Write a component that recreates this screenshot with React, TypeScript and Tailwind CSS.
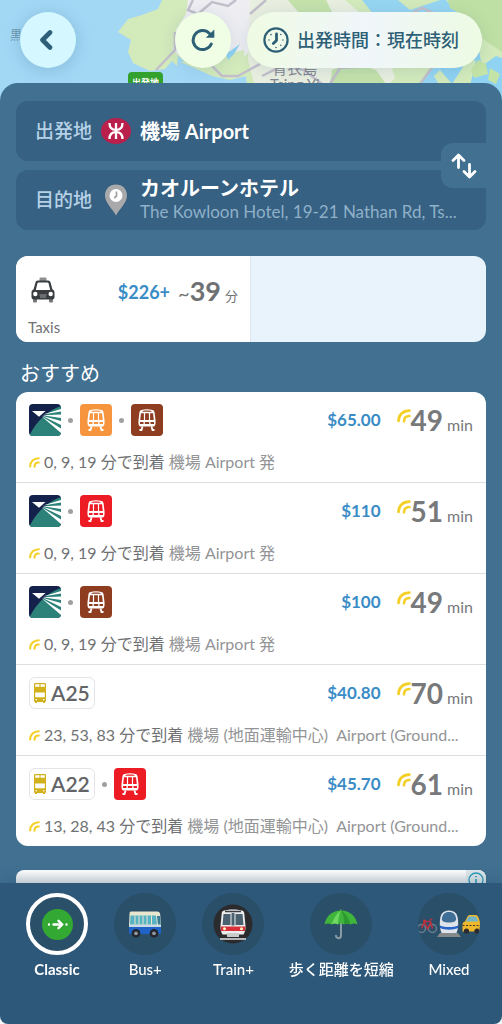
import { Fragment, ReactNode } from 'react';

type Leg = { kind: 'ael' | 'tcl' | 'twl' | 'ktl' } | { kind: 'bus'; route: string };

type Route = {
  legs: Leg[];
  price: string;
  minutes: number;
  arrivals: string;
  from: string;
};

const routes: Route[] = [
  {
    legs: [{ kind: 'ael' }, { kind: 'tcl' }, { kind: 'ktl' }],
    price: '$65.00',
    minutes: 49,
    arrivals: '0, 9, 19 分で到着',
    from: '機場 Airport 発',
  },
  {
    legs: [{ kind: 'ael' }, { kind: 'twl' }],
    price: '$110',
    minutes: 51,
    arrivals: '0, 9, 19 分で到着',
    from: '機場 Airport 発',
  },
  {
    legs: [{ kind: 'ael' }, { kind: 'ktl' }],
    price: '$100',
    minutes: 49,
    arrivals: '0, 9, 19 分で到着',
    from: '機場 Airport 発',
  },
  {
    legs: [{ kind: 'bus', route: 'A25' }],
    price: '$40.80',
    minutes: 70,
    arrivals: '23, 53, 83 分で到着',
    from: '機場 (地面運輸中心)\u00a0 Airport (Ground...',
  },
  {
    legs: [{ kind: 'bus', route: 'A22' }, { kind: 'twl' }],
    price: '$45.70',
    minutes: 61,
    arrivals: '13, 28, 43 分で到着',
    from: '機場 (地面運輸中心)\u00a0 Airport (Ground...',
  },
];

const lineColors = {
  tcl: 'bg-[#f7943e]',
  twl: 'bg-[#ed1b24]',
  ktl: 'bg-[#8f3d20]',
};

function MapBackdrop() {
  return (
    <div className="absolute inset-x-0 top-0 h-28 overflow-hidden bg-[#a3d8f5]">
      <svg
        className="h-full w-full"
        viewBox="0 0 502 112"
        preserveAspectRatio="xMidYMin slice"
        aria-hidden="true"
      >
        <rect width="502" height="112" fill="#a3d8f5" />
        <path
          d="M162 0 L158 9 L142 15 L128 19 L118 32 L131 40 L128 52 L133 63 L150 71 L165 69 L172 61 L177 66 L178 56 L190 66 L212 76 L230 80 L246 76 L250 112 L502 112 L502 0 Z"
          fill="#d3eabb"
        />
        <path d="M188 0 L186 14 L176 30 L173 50 L186 62 L240 62 L262 36 L250 0 Z" fill="#eeeef2" />
        <path d="M180 62 L212 58 L244 50 L246 76 L230 79 L212 75 Z" fill="#d3eabb" />
        <path d="M250 0 L345 0 L380 30 L395 78 L360 112 L262 112 L248 60 Z" fill="#e9efe0" />
        <path d="M362 0 L398 0 L410 10 L440 0 L446 0 L462 18 L450 60 L434 76 L442 90 L420 84 L440 60 L400 30 L378 20 Z" fill="#97d6f2" />
        <path d="M482 66 L496 56 L502 58 L502 112 L488 96 L470 86 L476 60 L466 62 L452 84 L440 70 L452 30 L478 46 Z" fill="#8fd2f2" />
        <path d="M478 60 L486 64 L488 74 L474 78 L471 70 Z M490 68 L500 74 L496 84 L488 80 Z" fill="#c3e4a6" />
        <path d="M448 0 L502 0 L502 52 L484 40 L472 20 L450 8 Z" fill="#bfe0a4" />
        <path d="M332 70 L352 62 L376 70 L386 84 L330 84 Z M288 0 L326 0 L334 16 L300 14 Z" fill="#c4e2aa" />
        <path d="M226 54 L240 44 L234 54 L228 60 Z" fill="#8fd2f2" />
        <g fill="none" stroke="#c2bfcb" strokeWidth="2.5">
          <path d="M193 0 L188 10 L198 14 L212 2 L228 6 L236 0" />
          <path d="M175 32 L175 50 L156 70" />
          <path d="M212 66 L222 76 L238 76 L260 64" />
          <path d="M250 14 L266 0 M262 76 L282 66 L304 70 L322 84" />
          <path d="M410 14 L422 8 L440 16 M420 84 L436 62" />
          <path d="M330 84 L340 68 L372 66" />
        </g>
      </svg>
      <span className="absolute top-7 left-2.5 text-[12px] leading-4 text-[#6d97ae]">黒</span>
      <span className="absolute top-[72px] left-[128px] rounded-sm bg-[#33a12e] px-1 pt-[3px] text-[9px] leading-4 font-bold text-white">
        出発地
      </span>
      <span className="absolute top-[60px] left-[270px] text-center text-[15px] leading-4 text-[#85878f]">
        青衣島
        <br />
        Tsing Yi
      </span>
    </div>
  );
}

function ClockIcon() {
  return (
    <svg className="h-[26px] w-[26px]" viewBox="0 0 26 26" fill="none" stroke="#2d6076" aria-hidden="true">
      <circle cx="13" cy="13" r="11.6" strokeWidth="2.2" />
      <path d="M13.5 7v6.400l-3.200 3.200" strokeWidth="2.8" strokeLinecap="round" strokeLinejoin="round" />
      <path
        d="M17.8 7.400v.1M20 13v.1M17.8 18.2v.1M13 20.400v.1M8 7.600v.1M6 13v.1"
        strokeWidth="1.5"
        strokeLinecap="round"
      />
    </svg>
  );
}

function MtrLogo() {
  return (
    <svg className="h-[26px] w-[30px]" viewBox="0 0 30 26" aria-hidden="true">
      <ellipse cx="15" cy="13" rx="15" ry="13" fill="#b9204b" />
      <g fill="none" stroke="#fff" strokeWidth="2.3">
        <path d="M15 5v16" />
        <path d="M8.500 5c0 4.500 2.600 6.900 6.500 6.900s6.500-2.400 6.500-6.900" />
        <path d="M8.500 21c0-4.500 2.600-6.900 6.500-6.900s6.500 2.400 6.500 6.900" />
      </g>
    </svg>
  );
}

function PinIcon() {
  return (
    <svg className="h-8 w-6" viewBox="0 0 24 32" aria-hidden="true">
      <path d="M12 .5C5.500.5 1 5.200 1 11.200 1 19 8 24 12 31.500 16 24 23 19 23 11.200 23 5.200 18.500.5 12 .5Z" fill="#a9a9ab" />
      <circle cx="12" cy="11.500" r="6.500" fill="#fff" />
      <path d="M12.500 7.500v4.500l-2.300 2" fill="none" stroke="#a0a0a3" strokeWidth="1.700" />
    </svg>
  );
}

function TaxiIcon() {
  return (
    <svg className="h-[26px] w-6" viewBox="0 0 24 26" aria-hidden="true">
      <rect x="8.500" y="0.500" width="7" height="4" rx="1" fill="#8d8f91" />
      <path d="M2 21h4v3.500a1 1 0 0 1-1 1H3a1 1 0 0 1-1-1ZM18 21h4v3.500a1 1 0 0 1-1 1h-2a1 1 0 0 1-1-1Z" fill="#77797b" />
      <path
        d="M7 3.500h10c1.500 0 2.200.8 2.600 2.200l1.800 6.500C23 13 23.500 14 23.500 15.500V20c0 1.600-.8 2.500-2.300 2.500H2.800C1.300 22.500.5 21.600.5 20v-4.500C.5 14 1 13 2.600 12.200l1.800-6.500C4.800 4.300 5.500 3.500 7 3.500Z"
        fill="#3a3d40"
      />
      <path d="M7.500 5.500h9c.6 0 .9.300 1.100.9l1.600 6.600H4.800l1.600-6.600c.2-.6.500-.9 1.100-.9Z" fill="#fff" />
      <circle cx="4.300" cy="17" r="2.200" fill="#fff" />
      <circle cx="19.700" cy="17" r="2.200" fill="#fff" />
      <path d="M8.500 18h7M9 20h6" stroke="#9b9d9f" strokeWidth="1" />
    </svg>
  );
}

function AirportExpressIcon() {
  return (
    <svg className="h-8 w-8 rounded" viewBox="0 0 32 32" aria-hidden="true">
      <rect width="32" height="32" fill="#14214b" />
      <path d="M0 32C4 24 9 17 16 11 21 7 26 4 32 2V32Z" fill="#2c8279" />
      <path d="M3 7h13.500L10 12.800Z" fill="#fff" />
      <path
        d="M14 10.500 32 5v2.500Z M13.500 11.200 32 10.500v3.500Z M13 11.800 32 17v4Z M12.500 12.300 32 24.500v4.500Z"
        fill="#fff"
      />
    </svg>
  );
}

function TrainGlyph() {
  return (
    <svg className="h-[22px] w-[18px]" viewBox="0 0 18 22" aria-hidden="true">
      <path
        fillRule="evenodd"
        fill="#fff"
        d="M3.500.9C7 0 11 0 14.500.9c1.200.3 1.800 1 2 2.200l1 8c.2 1.800.1 3.200-.2 4.600-.3 1.200-1 1.800-2.300 1.800H3c-1.300 0-2-.6-2.300-1.800-.3-1.400-.4-2.800-.2-4.600l1-8c.2-1.200.8-1.900 2-2.200ZM4.500 1.900v.9h9v-.9c-3-.6-6-.6-9 0ZM3 4.300l-.8 6.600h3.700V4.300ZM7.100 4.300v6.600h3.800V4.300ZM12.100 4.300v6.600h3.700L15 4.300ZM2 13v2h3.500v-2ZM6.800 13v2h4.400v-2ZM12.500 13v2H16v-2Z"
      />
      <path d="M4.500 17.500 3.500 21H1.500M13.500 17.500l1 3.500h2" fill="none" stroke="#fff" strokeWidth="1.800" />
    </svg>
  );
}

function BusGlyph() {
  return (
    <svg className="h-5 w-3" viewBox="0 0 12 20" aria-hidden="true">
      <path d="M1 0h10a1 1 0 0 1 1 1v17a1 1 0 0 1-1 1v1H9v-1H3v1H1v-1a1 1 0 0 1-1-1V1a1 1 0 0 1 1-1Z" fill="#d2b21c" />
      <path d="M1.200 1.200h4.300v2.600H1.200ZM6.500 1.200h4.300v2.600H6.500ZM1.200 9.500h9.600v4.700H1.200Z" fill="#fff" />
      <circle cx="2.300" cy="16.700" r="0.800" fill="#fff" />
      <circle cx="9.700" cy="16.700" r="0.800" fill="#fff" />
    </svg>
  );
}

function LiveIcon({ className }: { className: string }) {
  return (
    <svg className={className} viewBox="0 0 14 14" fill="none" stroke="#f4cf26" strokeLinecap="round" aria-hidden="true">
      <path d="M1.500 12C1.500 6 6 1.600 12.400 1.600" strokeWidth="2.700" />
      <path d="M7 12.300c0-3.300 2-5.300 5.400-5.300" strokeWidth="2.700" />
    </svg>
  );
}

function LegBadge({ leg }: { leg: Leg }) {
  if (leg.kind === 'ael') return <AirportExpressIcon />;
  if (leg.kind === 'bus') {
    return (
      <span className="flex h-8 items-center gap-[5px] rounded-md border border-[#e4e4e8] px-1 text-[21px] leading-6 font-semibold text-[#626466]">
        <BusGlyph />
        {leg.route}
      </span>
    );
  }
  return (
    <span className={`flex h-8 w-8 items-center justify-center rounded ${lineColors[leg.kind]}`}>
      <TrainGlyph />
    </span>
  );
}

function RouteRow({ route }: { route: Route }) {
  return (
    <li className="border-b border-[#dcdfe2] px-[13px] pt-3 pb-2 last:border-b-0">
      <div className="flex h-8 items-center">
        {route.legs.map((leg, i) => (
          <Fragment key={i}>
            {i > 0 && <span className="mx-[7px] h-[5px] w-[5px] rounded-full bg-[#a0a0a2]" />}
            <LegBadge leg={leg} />
          </Fragment>
        ))}
        <span className="ml-auto text-[17px] leading-6 font-bold text-[#3a8cc6]">{route.price}</span>
        <LiveIcon className="mb-2 ml-4 h-[14px] w-[14px]" />
        <span className="flex items-baseline gap-1 text-[#77797b]">
          <span className="text-[28px] leading-8 font-bold">{route.minutes}</span>
          <span className="text-[16px] leading-6">min</span>
        </span>
      </div>
      <p className="mt-[14px] flex items-center gap-1 text-[16px] leading-6">
        <LiveIcon className="h-[11px] w-[11px] shrink-0" />
        <span className="truncate text-[#939496]">
          <span className="text-[#6f7173]">{route.arrivals}</span> {route.from}
        </span>
      </p>
    </li>
  );
}

function ClassicIcon() {
  return (
    <svg className="h-[31px] w-[31px]" viewBox="0 0 31 31" aria-hidden="true">
      <circle cx="15.500" cy="15.500" r="15.500" fill="#33a933" />
      <g stroke="#fff" strokeWidth="2.400" strokeLinecap="round" strokeLinejoin="round" fill="none">
        <path d="M11.500 15.500h8M16.500 11.800l3.800 3.700-3.800 3.700" />
        <path d="M7 15.500v.01M24.500 15.500v.01" />
      </g>
    </svg>
  );
}

function BusEmoji() {
  return (
    <svg className="h-7 w-[34px]" viewBox="0 0 34 28" aria-hidden="true">
      <path d="M3 1.500h26c2.500 0 3 1 3.300 4L33 16H1L1.500 4C1.600 2.200 2 1.500 3 1.500Z" fill="#e9e6cf" />
      <path d="M2.500 5.500h25.500l1 9H2Z" fill="#57b3c4" />
      <path d="M7 5.500v9M11 5.500v9M15 5.500v9M19 5.500v9M23.500 5.500v9" stroke="#e9e6cf" strokeWidth="1" />
      <path d="M29 6h3l.7 8.500H30Z" fill="#377b94" />
      <path d="M1 15h32v7.500c0 1-.5 1.500-1.500 1.500h-29C1.500 24 1 23.500 1 22.500Z" fill="#1f62c8" />
      <path d="M1 15h32v2H1Z" fill="#c9d9e8" />
      <circle cx="8" cy="23.300" r="4.300" fill="#23262c" />
      <circle cx="8" cy="23.300" r="1.900" fill="#8f969d" />
      <circle cx="26" cy="23.300" r="4.300" fill="#23262c" />
      <circle cx="26" cy="23.300" r="1.900" fill="#8f969d" />
    </svg>
  );
}

function TrainEmoji() {
  return (
    <svg className="h-10 w-10" viewBox="0 0 40 40" aria-hidden="true">
      <circle cx="20" cy="20" r="19.500" fill="#2b2b2d" />
      <path d="M7 35h26" stroke="#b4b6b8" strokeWidth="2" />
      <path d="M11 6.500C16 5 24 5 29 6.500c1.500.5 2 1.200 2.300 3L32.500 22c.2 3-.5 6-2 8.500H9.500c-1.500-2.500-2.200-5.500-2-8.500L8.700 9.500c.3-1.800.8-2.500 2.300-3Z" fill="#ededee" />
      <path d="M10.500 10h7v11H9.500ZM22.500 10h7l1 11h-8ZM18.500 9h3v12.500h-3Z" fill="#4b6170" />
      <path d="M12 7.600h16" stroke="#3a3e42" strokeWidth="1.500" />
      <path d="M7.800 22.500h24.500c.1 1.500-.1 3-.5 4.500H8.200c-.4-1.500-.5-3-.4-4.500Z" fill="#d9303c" />
      <circle cx="11.500" cy="24.700" r="1.500" fill="#fff3c4" />
      <circle cx="28.500" cy="24.700" r="1.500" fill="#fff3c4" />
      <path d="M14 29h12v4H14Z" fill="#c8cacc" />
    </svg>
  );
}

function UmbrellaEmoji() {
  return (
    <svg className="h-8 w-[34px]" viewBox="0 0 34 32" aria-hidden="true">
      <path d="M17 14v13.500c0 3.500-5 3.500-5 .3" fill="none" stroke="#8c9aa3" strokeWidth="2" strokeLinecap="round" />
      <path d="M17 1v3" stroke="#5a7a50" strokeWidth="1.500" />
      <path d="M.5 16.500C2 8 8.500 2.500 17 2.500S32 8 33.500 16.500c-2-1.500-5-1.500-7 0-2.500-1.500-4.500-1.500-6.500 0-2-1.200-4-1.200-6 0-2-1.500-4.500-1.500-6.500 0-2-1.500-5-1.500-7 0Z" fill="#3fb53c" />
      <path d="M17 2.500c-4.500 3-7.500 8-9.500 14 2-1.500 4.500-1.500 6.500 0 .3-6 1-10 3-14Z" fill="#6fd860" />
      <path d="M17 2.500c2.500 4 3.200 9 3 14 2-1.500 4-1.500 6.500 0C25 10 21.500 5 17 2.500Z" fill="#2c9a30" />
    </svg>
  );
}

function MixedEmoji() {
  return (
    <svg className="h-7 w-[62px]" viewBox="0 0 62 28" aria-hidden="true">
      <g fill="none" stroke="#6c7f92" strokeWidth="1.400">
        <circle cx="3.500" cy="18.500" r="4" />
        <circle cx="14.500" cy="18.500" r="4" />
      </g>
      <path d="M3.500 18.500 6.500 11.500h6l2 7M6.500 12l3 6.500 3.500-6M5 10.500h3M12 9.500h2.500" fill="none" stroke="#b8323f" strokeWidth="1.600" />
      <path d="M19 27h24l-3-4H22Z" fill="#85898c" />
      <path d="M31 .5c6 0 8.500 3.500 9 9.500.4 5 .2 9-1.500 13h-15C21.800 19 21.600 15 22 10 22.500 4 25 .5 31 .5Z" fill="#dfe3ea" />
      <path d="M31 2c4.500 0 6.500 2.500 7.200 7-.2 2.500-2.500 3.500-7.200 3.500s-7-1-7.200-3.500C24.500 4.500 26.500 2 31 2Z" fill="#3f6f96" />
      <path d="M22 15.500c5 2 13 2 18 0V18c-5 2.200-13 2.200-18 0Z" fill="#2a66c9" />
      <path d="M47 11.500 49.500 6.500C50 5.500 51 5 52 5h5c1.500 0 2.500.5 3 1.500L62 11v10.500H44.500V15c0-2 .8-3 2.500-3.500Z" fill="#efb72c" />
      <path d="M48 11.500l2.200-4c.3-.7.8-1 1.500-1h5c1 0 1.700.4 2 1.200l1.500 3.800Z" fill="#6fb6c8" />
      <path d="M44.500 15.500H62" stroke="#3b3423" strokeWidth="1" strokeDasharray="2 1.500" />
      <circle cx="48.500" cy="21" r="2.600" fill="#2b2b2e" />
      <circle cx="59" cy="21" r="2.600" fill="#2b2b2e" />
    </svg>
  );
}

const modes: { label: string; icon: ReactNode; active?: boolean }[] = [
  { label: 'Classic', icon: <ClassicIcon />, active: true },
  { label: 'Bus+', icon: <BusEmoji /> },
  { label: 'Train+', icon: <TrainEmoji /> },
  { label: '歩く距離を短縮', icon: <UmbrellaEmoji /> },
  { label: 'Mixed', icon: <MixedEmoji /> },
];

export default function App() {
  return (
    <div className="relative flex h-screen flex-col overflow-hidden bg-white font-['Lato','Noto_Sans_CJK_JP',sans-serif]">
      <MapBackdrop />

      <header className="relative flex shrink-0 items-center px-5 pt-3 pb-[15px]">
        <button
          aria-label="戻る"
          className="flex h-14 w-14 items-center justify-center rounded-full bg-[#d5f7ff] shadow-[0_2px_16px_rgba(40,90,130,0.25)]"
        >
          <svg className="mr-1 h-[22px] w-[14px]" viewBox="0 0 14 22" fill="none" aria-hidden="true">
            <path d="M11 3.500 3.500 11l7.500 7.500" stroke="#2d6078" strokeWidth="4.600" strokeLinecap="round" strokeLinejoin="round" />
          </svg>
        </button>
        <button
          aria-label="更新"
          className="ml-auto flex h-14 w-14 items-center justify-center rounded-full bg-[#f1fee6] shadow-[0_2px_16px_rgba(40,90,130,0.15)]"
        >
          <svg className="h-6 w-6" viewBox="0 0 24 24" fill="none" aria-hidden="true">
            <path d="M20.300 16A9.500 9.500 0 1 1 18.500 5.500" stroke="#2d6076" strokeWidth="3" strokeLinecap="round" />
            <path d="M23.300 1.500v8.300h-8.500Z" fill="#2d6076" />
          </svg>
        </button>
        <button className="ml-4 flex h-14 items-center gap-2 rounded-full bg-[#f2fbe8] bg-linear-to-r from-[#effbe3] via-[#f0f6fa] to-[#edfbe3] pr-[23px] pl-4 text-[18px] leading-6 font-medium text-[#2d6076] shadow-[0_2px_16px_rgba(40,90,130,0.15)]">
          <ClockIcon />
          出発時間：現在時刻
        </button>
      </header>

      <main className="relative min-h-0 flex-1 overflow-y-auto rounded-t-[18px] bg-[#417091] px-4 pt-[18px] [scrollbar-width:none]">
        <section className="relative flex flex-col gap-[9px]">
          <button className="flex h-[60px] w-full items-center rounded-xl bg-[#366182] px-[19px] text-left">
            <span className="w-[57px] shrink-0 text-[19px] leading-6 font-medium text-[#b5d1e6]">出発地</span>
            <span className="mx-[9px] flex w-[30px] shrink-0 justify-center">
              <MtrLogo />
            </span>
            <span className="truncate text-[20px] leading-6 font-bold text-white">機場 Airport</span>
          </button>
          <button className="flex h-[60px] w-full items-center rounded-xl bg-[#366182] px-[19px] text-left">
            <span className="w-[57px] shrink-0 text-[19px] leading-6 font-medium text-[#b5d1e6]">目的地</span>
            <span className="mx-[9px] flex w-[30px] shrink-0 justify-center">
              <PinIcon />
            </span>
            <span className="flex min-w-0 flex-col">
              <span className="truncate text-[20px] leading-6 font-bold text-white">カオルーンホテル</span>
              <span className="truncate text-[17px] leading-6 text-[#8fb0c9]">
                The Kowloon Hotel, 19-21 Nathan Rd, Ts...
              </span>
            </span>
          </button>
          <button
            aria-label="出発地と目的地を入れ替える"
            className="absolute top-[42px] right-0 flex h-[45px] w-[45px] items-center justify-center rounded-l-xl bg-[#417091]"
          >
            <svg className="h-[26px] w-[26px]" viewBox="0 0 26 26" fill="none" stroke="#fff" strokeWidth="2.800" strokeLinecap="round" strokeLinejoin="round" aria-hidden="true">
              <path d="M7.500 14.500V2.500M2 7.500l5.500-5.500 5.500 5.500" />
              <path d="M18.500 11.500v12M13 18.500l5.500 5.500 5.500-5.500" />
            </svg>
          </button>
        </section>

        <section className="mt-[26px] grid grid-cols-2 overflow-hidden rounded-xl bg-[#e9f3fc]">
          <button className="border-r border-[#dfe5ea] bg-white px-3 pt-5 pb-1 text-left">
            <span className="flex h-8 items-center">
              <span className="mb-1 ml-[3px]">
                <TaxiIcon />
              </span>
              <span className="ml-auto text-[18px] leading-6 font-bold text-[#3a8cc6]">$226+</span>
              <span className="ml-2 flex items-baseline text-[#707173]">
                <span className="text-[20px] leading-8">~</span>
                <span className="text-[27px] leading-8 font-bold">39</span>
                <span className="ml-1 text-[13px] leading-4">分</span>
              </span>
            </span>
            <span className="mt-2 block text-[15px] leading-[22px] text-[#6f7173]">Taxis</span>
          </button>
        </section>

        <h2 className="mt-[18px] mb-[6px] ml-1 text-[20px] leading-[26px] text-white">おすすめ</h2>

        <ul className="overflow-hidden rounded-xl bg-white">
          {routes.map((route, i) => (
            <RouteRow key={i} route={route} />
          ))}
        </ul>

        <aside className="mt-6 flex h-[60px] justify-end rounded-lg bg-linear-to-b from-white from-0% to-[#e3e5e6] to-25%">
          <button aria-label="広告の情報" className="flex h-5 w-5 items-center justify-center rounded-tr-lg bg-[#dfe8eb]">
            <svg className="h-4 w-4" viewBox="0 0 16 16" fill="none" stroke="#2a9cb8" aria-hidden="true">
              <circle cx="8" cy="8" r="7" strokeWidth="1.300" />
              <path d="M8 7v5M8 4v1.300" strokeWidth="1.600" />
            </svg>
          </button>
        </aside>
      </main>

      <nav className="relative flex shrink-0 justify-between rounded-b-lg bg-[#2d5879] pt-[10px] pr-5 pb-[45px] pl-6 shadow-[0_-4px_14px_rgba(30,70,105,0.25)]">
        {modes.map(mode => (
          <button key={mode.label} className="flex min-w-[66px] flex-col items-center gap-1 text-white">
            <span
              className={`flex h-[62px] w-[62px] items-center justify-center overflow-hidden rounded-full bg-[#2a4f69] ${
                mode.active ? 'border-4 border-white' : ''
              }`}
            >
              {mode.icon}
            </span>
            <span className={`text-[15px] leading-5 whitespace-nowrap ${mode.active ? 'font-bold' : 'font-medium'}`}>
              {mode.label}
            </span>
          </button>
        ))}
      </nav>
    </div>
  );
}
